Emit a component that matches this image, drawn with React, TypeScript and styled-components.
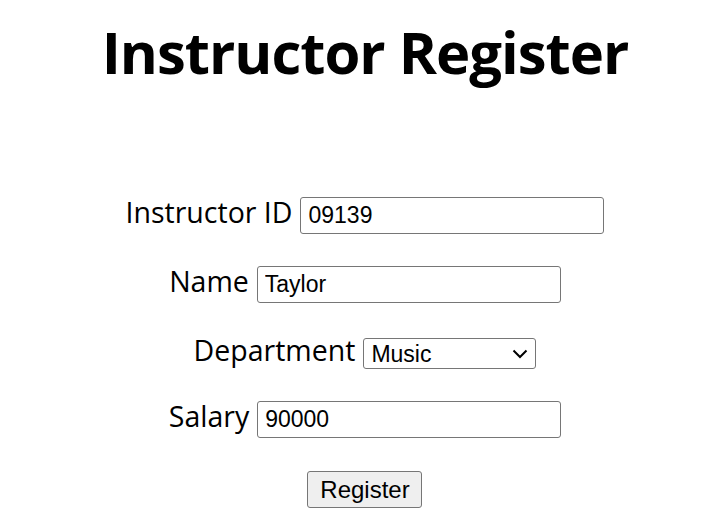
import React from "react";
import styled, { createGlobalStyle } from "styled-components";

const GlobalStyle = createGlobalStyle`
  html, body { margin: 0; padding: 0; background: #ffffff; }
  body { font-family: "Open Sans", "Noto Sans", sans-serif; color: #000; }
`;

const Page = styled.div`
  padding: 0 0 0 19px;
  display: flex;
  flex-direction: column;
  align-items: center;
`;

const Title = styled.h1`
  margin: 11px 0 0;
  font-family: "Open Sans", "Noto Sans", sans-serif;
  font-weight: 700;
  font-size: 58px;
  line-height: 82px;
  letter-spacing: -1px;
`;

const Form = styled.form`
  display: flex;
  flex-direction: column;
  align-items: center;
  margin-top: 101px;
`;

const Row = styled.div<{ $top: number }>`
  display: flex;
  align-items: center;
  justify-content: center;
  gap: 8px;
  margin-top: ${(p) => p.$top}px;
`;

const Label = styled.label`
  font-family: "Open Sans", "Noto Sans", sans-serif;
  font-size: 28.5px;
  line-height: 37px;
  margin-bottom: 6px;
`;

const TextInput = styled.input`
  box-sizing: border-box;
  width: 304px;
  height: 37px;
  padding: 0 7px;
  font-family: "Liberation Sans", Arial, sans-serif;
  font-size: 23px;
  color: #000;
  border: 1px solid #767676;
  border-radius: 3px;
  background: #fff;
  outline: none;
`;

const SelectWrap = styled.div`
  position: relative;
  display: inline-flex;
`;

const Select = styled.select`
  box-sizing: border-box;
  appearance: none;
  width: 173px;
  height: 31px;
  padding: 0 28px 0 7px;
  font-family: "Liberation Sans", Arial, sans-serif;
  font-size: 23px;
  color: #000;
  border: 1px solid #767676;
  border-radius: 3px;
  background: #fff;
  outline: none;
`;

const Chevron = styled.svg`
  position: absolute;
  right: 8px;
  top: 50%;
  transform: translateY(-50%);
  pointer-events: none;
`;

const Button = styled.button`
  box-sizing: border-box;
  width: 115px;
  height: 37px;
  font-family: "Liberation Sans", Arial, sans-serif;
  font-size: 24px;
  color: #000;
  background: #efefef;
  border: 1px solid #767676;
  border-radius: 3px;
  padding: 0;
`;

export default function App() {
  return (
    <>
      <GlobalStyle />
      <Page>
        <Title>Instructor Register</Title>
        <Form onSubmit={(e) => e.preventDefault()}>
          <Row $top={0}>
            <Label>Instructor ID</Label>
            <TextInput defaultValue="09139" />
          </Row>
          <Row $top={26}>
            <Label>Name</Label>
            <TextInput defaultValue="Taylor" />
          </Row>
          <Row $top={26}>
            <Label>Department</Label>
            <SelectWrap>
              <Select defaultValue="Music">
                <option>Music</option>
                <option>Physics</option>
                <option>History</option>
              </Select>
              <Chevron width="16" height="10" viewBox="0 0 16 10">
                <path d="M1.5 1.5 L8 8 L14.5 1.5" fill="none" stroke="#000" strokeWidth="2" />
              </Chevron>
            </SelectWrap>
          </Row>
          <Row $top={23}>
            <Label>Salary</Label>
            <TextInput defaultValue="90000" />
          </Row>
          <Row $top={30}>
            <Button type="submit">Register</Button>
          </Row>
        </Form>
      </Page>
    </>
  );
}
